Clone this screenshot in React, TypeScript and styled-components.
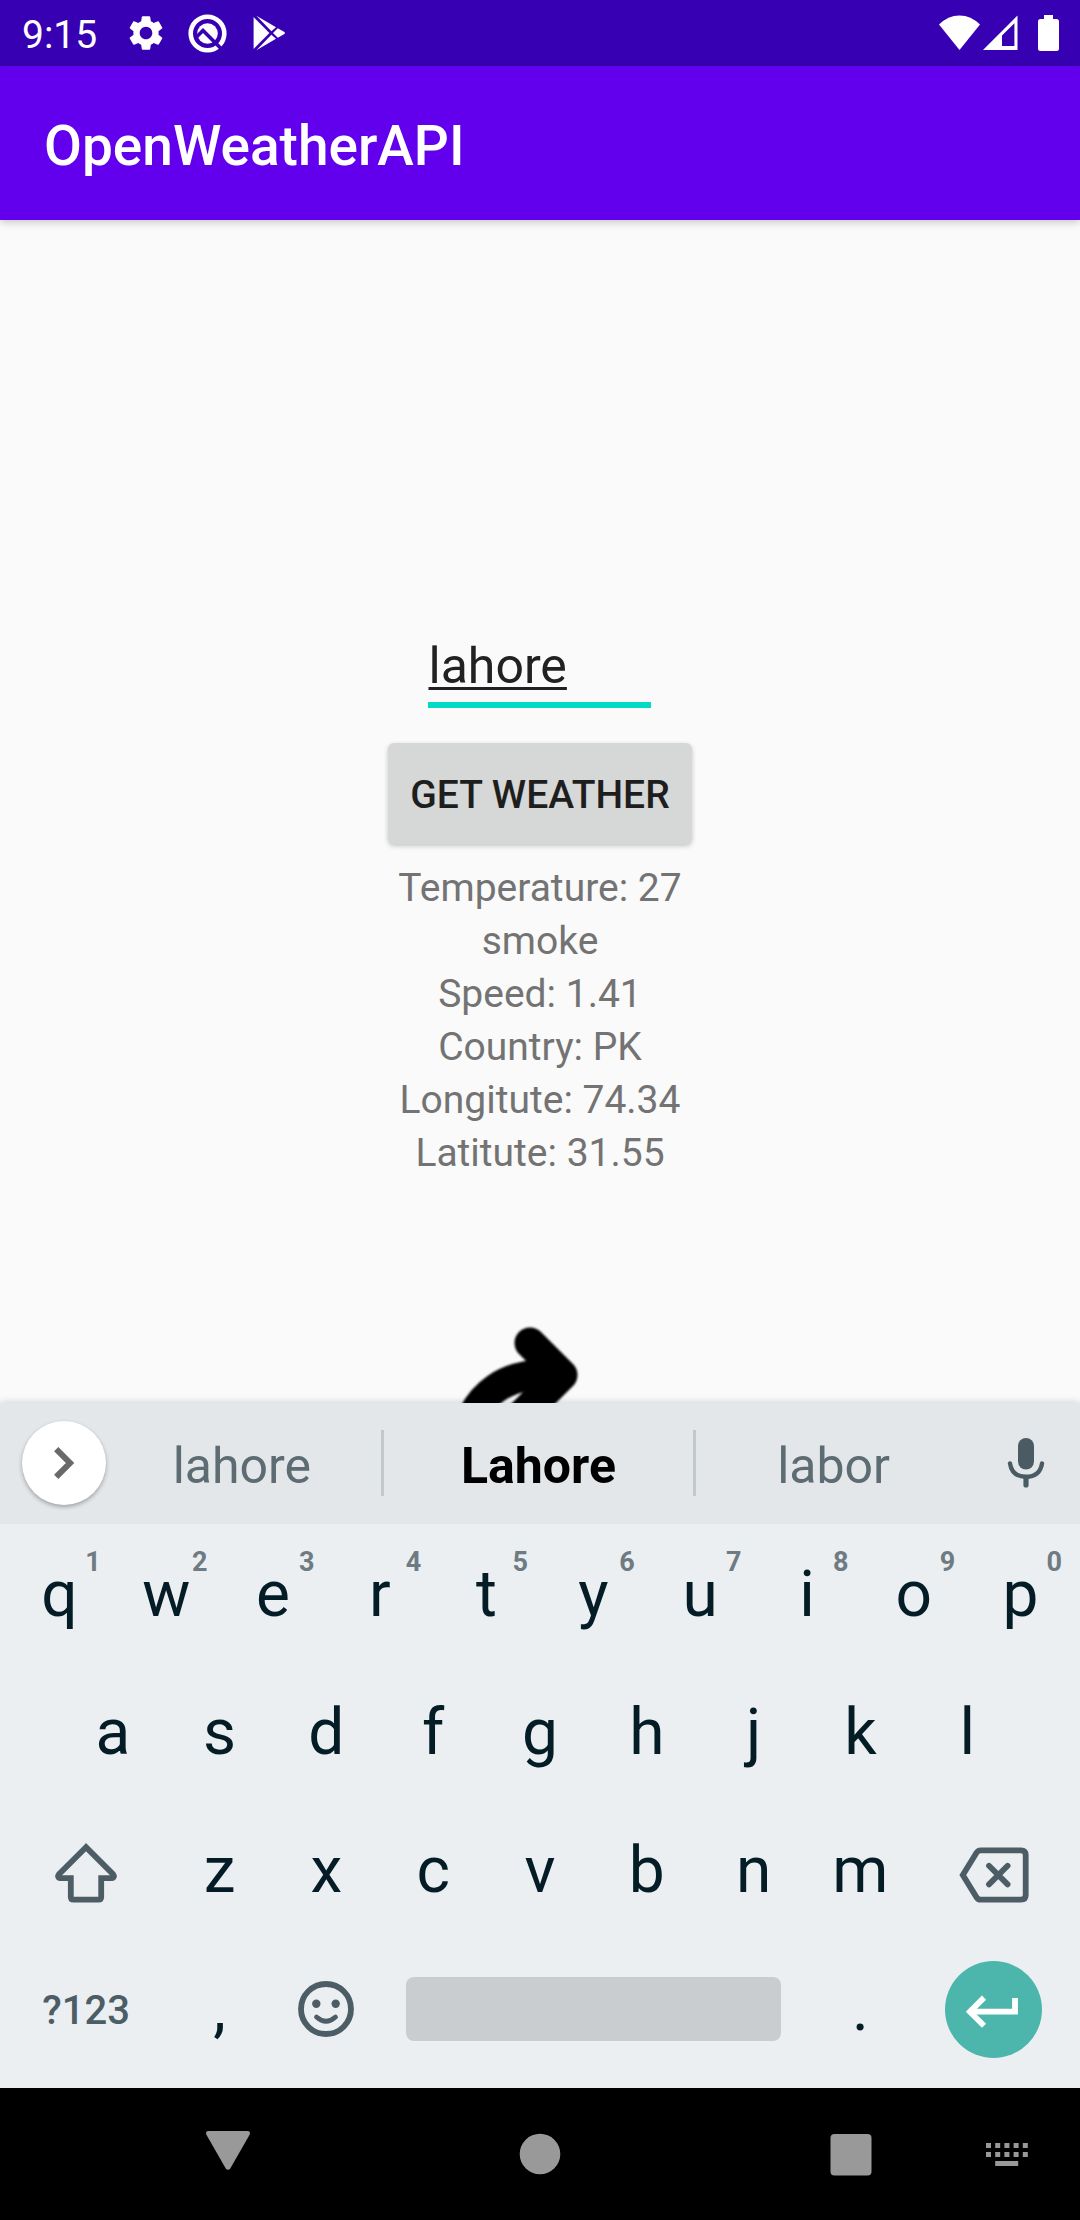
import React, { useState } from "react";
import styled, { createGlobalStyle } from "styled-components";
import { MdSettings } from "react-icons/md";

const GlobalStyle = createGlobalStyle`
  *, *::before, *::after { box-sizing: border-box; }
  body { margin: 0; background: #fafafa; font-family: Roboto, "Noto Sans", sans-serif; }
  button, input { font-family: inherit; }
  svg { display: block; flex: none; }
`;

const Screen = styled.div`
  display: flex;
  flex-direction: column;
  min-height: 100vh;
`;

/* ---------- Status bar ---------- */

const StatusBar = styled.header`
  display: flex;
  align-items: center;
  justify-content: space-between;
  height: 66px;
  padding: 0 21px 0 22px;
  background: #3700b3;
  color: #fff;
`;

const StatusGroup = styled.div<{ $gap: number }>`
  display: flex;
  align-items: center;
  gap: ${(p) => p.$gap}px;
`;

const Clock = styled.time`
  padding: 3px 8px 0 0;
  font-size: 39px;
  line-height: 46px;
`;

/* ---------- App bar ---------- */

const AppBar = styled.div`
  display: flex;
  align-items: center;
  height: 154px;
  padding: 0 44px;
  background: #6200ee;
  color: #fff;
  box-shadow: 0 2px 8px rgba(0, 0, 0, 0.22);
`;

const Title = styled.h1`
  margin: 0;
  padding-top: 6px;
  font-size: 55px;
  font-weight: 500;
  line-height: 64px;
`;

/* ---------- Weather form ---------- */

const Content = styled.main`
  display: flex;
  flex: 1;
  flex-direction: column;
  align-items: center;
  padding-top: 410px;
`;

const Form = styled.form`
  display: flex;
  flex-direction: column;
  align-items: center;
  gap: 35px;
`;

const CityInput = styled.input`
  width: 223px;
  height: 78px;
  padding: 0;
  border: 0;
  border-bottom: 6px solid #03dac5;
  border-radius: 0;
  outline: 0;
  background: transparent;
  color: #212121;
  font-size: 50px;
  line-height: 60px;
  text-decoration: underline;
  text-decoration-thickness: 3px;
  text-underline-offset: 4px;
  text-decoration-skip-ink: none;
`;

const SubmitButton = styled.button`
  height: 101px;
  padding: 2px 22px 0;
  border: 0;
  border-radius: 6px;
  background: #d6d7d7;
  box-shadow: 0 2px 5px rgba(0, 0, 0, 0.22);
  color: #1e1e1e;
  font-size: 39px;
  font-weight: 500;
  line-height: 46px;
  text-transform: uppercase;
`;

const Results = styled.div`
  display: flex;
  flex-direction: column;
  padding-top: 18px;
  color: #737373;
  font-size: 39px;
  line-height: 53px;
  text-align: center;
`;

const WeatherArt = styled.div`
  margin-top: auto;
`;

/* ---------- Keyboard ---------- */

const Keyboard = styled.section`
  background: #ebeff2;
  box-shadow: 0 -1px 7px rgba(0, 0, 0, 0.16);
  z-index: 1;
`;

const SuggestionStrip = styled.div`
  display: grid;
  grid-template-columns: 103px 8fr 9fr 8fr 109px;
  align-items: center;
  height: 121px;
  padding-bottom: 2px;
  background: #e3e7ea;
`;

const BareButton = styled.button`
  display: flex;
  align-items: center;
  justify-content: center;
  padding: 0;
  border: 0;
  background: transparent;
  color: #4d5d65;
`;

const ExpandButton = styled(BareButton)`
  width: 84px;
  height: 84px;
  margin-left: 22px;
  border-radius: 50%;
  background: #fff;
  box-shadow: 0 2px 4px rgba(0, 0, 0, 0.3);
`;

const Suggestion = styled(BareButton)<{ $main?: boolean; $divided?: boolean }>`
  height: 66px;
  padding-top: 6px;
  border-left: ${(p) => (p.$divided ? "3px solid #c3c8cb" : "0")};
  color: ${(p) => (p.$main ? "#000" : "#5d6b72")};
  font-size: 50px;
  font-weight: ${(p) => (p.$main ? 700 : 400)};
  line-height: 58px;
`;

const Keys = styled.div`
  display: grid;
  grid-auto-rows: 138px;
  padding: 2px 6px 10px;
`;

const KeyRow = styled.div`
  display: flex;
`;

const Spacer = styled.span`
  flex: 0.5 1 0;
`;

const Key = styled(BareButton)<{ $span?: number; $label?: boolean; $lowered?: boolean }>`
  position: relative;
  flex: ${(p) => p.$span ?? 1} 1 0;
  min-width: 0;
  padding-top: ${(p) => (p.$lowered ? 4 : 0)}px;
  color: ${(p) => (p.$label ? "#4d5d65" : "#041c26")};
  font-size: ${(p) => (p.$label ? 40 : 64)}px;
  font-weight: ${(p) => (p.$label ? 500 : 400)};
  line-height: 76px;
`;

const KeyHint = styled.sup`
  position: absolute;
  top: 20px;
  right: 12px;
  color: #6f7b82;
  font-size: 27px;
  font-weight: 700;
  line-height: 32px;
`;

const SpaceBar = styled.span`
  flex: 1;
  height: 64px;
  margin: 0 26px;
  border-radius: 8px;
  background: #c9cdd0;
`;

const EnterDisc = styled.span`
  display: block;
  width: 97px;
  height: 97px;
  border-radius: 50%;
  background: #4db6ac;
`;

/* ---------- System navigation ---------- */

const NavBar = styled.nav`
  display: flex;
  align-items: center;
  justify-content: space-between;
  height: 132px;
  padding: 0 13px 0 168px;
  background: #000;
`;

const NavGroup = styled.div`
  display: flex;
  gap: 36px;
`;

const NavButton = styled(BareButton)`
  width: 120px;
  height: 96px;
  color: #999;
`;

/* ---------- Drawings ---------- */

const QIcon = () => (
  <svg width="39" height="39" viewBox="0 0 39 39" fill="none">
    <circle cx="19.5" cy="19.5" r="16.8" stroke="#fff" strokeWidth="4.6" />
    <circle cx="19.5" cy="19.5" r="10.3" fill="#fff" />
    <path d="M7 24.5 L15 16.5 L34 35.5" stroke="#3700b3" strokeWidth="3.6" />
  </svg>
);

const PlayIcon = () => (
  <svg width="33" height="36" viewBox="0 0 33 36" fill="#fff">
    <path d="M0.6 2 L16.4 18 L0.6 34 Z" />
    <path d="M3.4 0.8 L23 12.3 L18.4 16.2 Z" />
    <path d="M3.4 35.2 L23 23.7 L18.4 19.8 Z" />
    <path d="M24.8 13.2 L31.4 17 Q32.6 18 31.4 19 L24.8 22.8 L20 18 Z" />
  </svg>
);

const WifiIcon = () => (
  <svg width="41" height="36" viewBox="0 0 41 36" fill="#fff">
    <path d="M20.5 35 L0 9.5 Q9 0.4 20.5 0.4 Q32 0.4 41 9.5 Z" />
  </svg>
);

const SignalIcon = () => (
  <svg width="35" height="36" viewBox="0 0 35 36" fill="#fff" fillRule="evenodd">
    <path d="M0 35 L34.5 0.5 V35 Z M19 20.5 V31 H31.4 V8.2 Z" />
  </svg>
);

const BatteryIcon = () => (
  <svg width="21" height="36" viewBox="0 0 21 36" fill="#fff">
    <path d="M6 0 H15 V4 H18.5 Q21 4 21 6.5 V33.5 Q21 36 18.5 36 H2.5 Q0 36 0 33.5 V6.5 Q0 4 2.5 4 H6 Z" />
  </svg>
);

const CurvedArrow = () => (
  <svg width="170" height="80" viewBox="0 0 170 80" fill="none" stroke="#000" role="img" aria-label="Weather arrow">
    <defs>
      <filter id="soft" x="-20%" y="-20%" width="140%" height="140%">
        <feGaussianBlur stdDeviation="1.2" />
      </filter>
    </defs>
    <g filter="url(#soft)">
      <path d="M75 20 L107 52 L65 94" strokeWidth="31" strokeLinecap="round" strokeLinejoin="round" />
      <path d="M12 106 Q30 52 92 51" strokeWidth="30" />
    </g>
  </svg>
);

const ChevronIcon = () => (
  <svg width="84" height="84" viewBox="0 0 84 84" fill="none" stroke="#696969" strokeWidth="6">
    <path d="M34.2 28.2 L48 42 L34.2 55.8" />
  </svg>
);

const MicIcon = () => (
  <svg width="38" height="50" viewBox="0 0 38 50" fill="none" stroke="#4b5b63" strokeLinecap="round">
    <rect x="11" y="0" width="16" height="31.5" rx="8" fill="#4b5b63" stroke="none" />
    <path d="M3 25.5 C4.5 35 11 38.8 19 38.8 C27 38.8 33.5 35 35 25.5" strokeWidth="4.4" />
    <path d="M19 40 V47" strokeWidth="5.2" />
  </svg>
);

const ShiftIcon = () => (
  <svg width="62" height="60" viewBox="0 0 62 60" fill="none" stroke="#4d5d65" strokeWidth="5.8">
    <path d="M31 4.2 L4 31.2 Q1.8 34.5 5 35.2 H15.8 V54 Q15.8 56.6 18.4 56.6 H43.6 Q46.2 56.6 46.2 54 V35.2 H57 Q60.2 34.5 58 31.2 Z" />
  </svg>
);

const BackspaceIcon = () => (
  <svg width="70" height="60" viewBox="0 -4 70 60" fill="none" stroke="#4d5d65" strokeWidth="5.8">
    <path d="M3.8 28 L17.5 5.8 Q19 3.3 21.5 3.3 H62 Q66.7 3.3 66.7 8 V48 Q66.7 52.7 62 52.7 H21.5 Q19 52.7 17.5 50.2 Z" />
    <path d="M30 18.8 L48.6 37.4 M48.6 18.8 L30 37.4" strokeLinecap="round" />
  </svg>
);

const SmileIcon = () => (
  <svg width="56" height="56" viewBox="0 0 56 56" fill="none" stroke="#4d5d65">
    <circle cx="28" cy="28" r="25" strokeWidth="5.8" />
    <circle cx="18.3" cy="22.7" r="4.2" fill="#4d5d65" stroke="none" />
    <circle cx="37.7" cy="22.7" r="4.2" fill="#4d5d65" stroke="none" />
    <path d="M18.5 36 Q28 44.5 37.5 36" strokeWidth="4.8" strokeLinecap="round" />
  </svg>
);

const EnterIcon = () => (
  <svg width="97" height="97" viewBox="0 0 97 97" fill="none" stroke="#fff" strokeWidth="5.8">
    <path d="M39 36.6 L24.9 50.7 L39 64.8" />
    <path d="M26 50.7 H70 V37" />
  </svg>
);

const BackShape = () => (
  <svg width="48" height="48" viewBox="0 0 48 48" fill="currentColor">
    <path d="M5 1 H43 Q47.2 1 45.6 4.8 L26.4 38.2 Q24 41.5 21.6 38.2 L2.4 4.8 Q0.8 1 5 1 Z" />
  </svg>
);

const HomeShape = () => (
  <svg width="48" height="48" viewBox="0 0 48 48" fill="currentColor">
    <circle cx="24" cy="24" r="20.3" />
  </svg>
);

const RecentsShape = () => (
  <svg width="48" height="48" viewBox="0 0 48 48" fill="currentColor">
    <rect x="3.5" y="4" width="41" height="41.5" rx="4" />
  </svg>
);

const KeyboardShape = () => (
  <svg width="48" height="48" viewBox="0 0 48 48" fill="currentColor">
    {[0, 1, 2, 3, 4].map((n) => (
      <React.Fragment key={n}>
        <rect x={3 + n * 9.2} y="13" width="5" height="5" />
        <rect x={3 + n * 9.2} y="22" width="5" height="5" />
      </React.Fragment>
    ))}
    <rect x="12.2" y="31" width="23" height="5" />
  </svg>
);

const topRow = [..."qwertyuiop"];
const homeRow = [..."asdfghjkl"];
const bottomRow = [..."zxcvbnm"];

const report = [
  "Temperature: 27",
  "smoke",
  "Speed: 1.41",
  "Country: PK",
  "Longitute: 74.34",
  "Latitute: 31.55",
];

export default function App() {
  const [city, setCity] = useState("lahore");
  const type = (letter: string) => setCity((value) => value + letter);

  return (
    <Screen>
      <GlobalStyle />
      <StatusBar>
        <StatusGroup $gap={20}>
          <Clock>9:15</Clock>
          <StatusGroup $gap={26}>
            <StatusGroup $gap={21}>
              <MdSettings size={42} />
              <QIcon />
            </StatusGroup>
            <PlayIcon />
          </StatusGroup>
        </StatusGroup>
        <StatusGroup $gap={20}>
          <StatusGroup $gap={3}>
            <WifiIcon />
            <SignalIcon />
          </StatusGroup>
          <BatteryIcon />
        </StatusGroup>
      </StatusBar>

      <AppBar>
        <Title>OpenWeatherAPI</Title>
      </AppBar>

      <Content>
        <Form onSubmit={(e) => e.preventDefault()}>
          <CityInput
            aria-label="City"
            value={city}
            spellCheck={false}
            onChange={(e) => setCity(e.target.value)}
          />
          <SubmitButton type="submit">Get weather</SubmitButton>
        </Form>
        <Results>
          {report.map((line) => (
            <span key={line}>{line}</span>
          ))}
        </Results>
        <WeatherArt>
          <CurvedArrow />
        </WeatherArt>
      </Content>

      <Keyboard aria-label="Keyboard">
        <SuggestionStrip>
          <ExpandButton aria-label="More">
            <ChevronIcon />
          </ExpandButton>
          <Suggestion onClick={() => setCity("lahore")}>lahore</Suggestion>
          <Suggestion $main $divided onClick={() => setCity("Lahore")}>
            Lahore
          </Suggestion>
          <Suggestion $divided onClick={() => setCity("labor")}>
            labor
          </Suggestion>
          <BareButton aria-label="Voice input">
            <MicIcon />
          </BareButton>
        </SuggestionStrip>

        <Keys>
          <KeyRow>
            {topRow.map((letter, i) => (
              <Key key={letter} onClick={() => type(letter)}>
                {letter}
                <KeyHint>{(i + 1) % 10}</KeyHint>
              </Key>
            ))}
          </KeyRow>
          <KeyRow>
            <Spacer />
            {homeRow.map((letter) => (
              <Key key={letter} onClick={() => type(letter)}>
                {letter}
              </Key>
            ))}
            <Spacer />
          </KeyRow>
          <KeyRow>
            <Key $span={1.5} $lowered aria-label="Shift">
              <ShiftIcon />
            </Key>
            {bottomRow.map((letter) => (
              <Key key={letter} onClick={() => type(letter)}>
                {letter}
              </Key>
            ))}
            <Key $span={1.5} $lowered aria-label="Backspace" onClick={() => setCity((v) => v.slice(0, -1))}>
              <BackspaceIcon />
            </Key>
          </KeyRow>
          <KeyRow>
            <Key $span={1.5} $label $lowered>
              ?123
            </Key>
            <Key onClick={() => type(",")}>,</Key>
            <Key aria-label="Emoji">
              <SmileIcon />
            </Key>
            <Key $span={4} aria-label="Space" onClick={() => type(" ")}>
              <SpaceBar />
            </Key>
            <Key onClick={() => type(".")}>.</Key>
            <Key $span={1.5} aria-label="Enter">
              <EnterDisc>
                <EnterIcon />
              </EnterDisc>
            </Key>
          </KeyRow>
        </Keys>
      </Keyboard>

      <NavBar>
        <NavButton aria-label="Back">
          <BackShape />
        </NavButton>
        <NavButton aria-label="Home">
          <HomeShape />
        </NavButton>
        <NavGroup>
          <NavButton aria-label="Recents">
            <RecentsShape />
          </NavButton>
          <NavButton aria-label="Switch keyboard">
            <KeyboardShape />
          </NavButton>
        </NavGroup>
      </NavBar>
    </Screen>
  );
}
